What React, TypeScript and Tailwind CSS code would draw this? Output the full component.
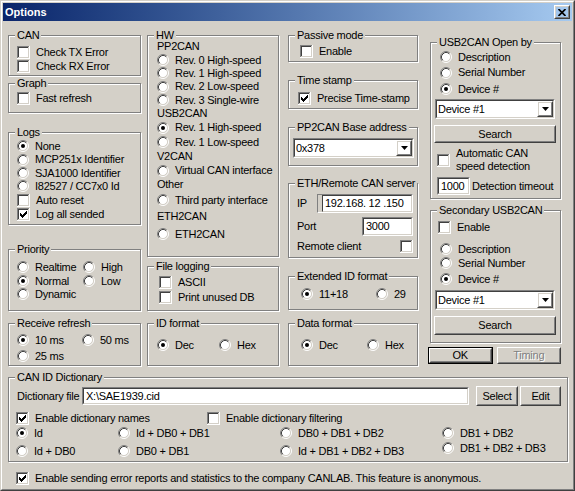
import React from "react";

const sunkO = "border border-t-[#808080] border-l-[#808080] border-b-white border-r-white";
const sunkI = "border border-t-[#404040] border-l-[#404040] border-b-[#D4D0C8] border-r-[#D4D0C8]";
const raisO = "border border-t-white border-l-white border-b-[#404040] border-r-[#404040]";
const raisI = "border border-t-[#D4D0C8] border-l-[#D4D0C8] border-b-[#808080] border-r-[#808080]";

function Check({ checked }: { checked?: boolean }) {
  return (
    <svg width="13" height="13" viewBox="0 0 13 13" className="shrink-0 block" shapeRendering="crispEdges">
      <rect x="2" y="2" width="9" height="9" fill="#fff" />
      <path d="M0.5 12V0.5H12" stroke="#808080" fill="none" />
      <path d="M1.5 11V1.5H11" stroke="#404040" fill="none" />
      <path d="M0 12.5H12.5V0" stroke="#fff" fill="none" />
      <path d="M1 11.5H11.5V1" stroke="#D4D0C8" fill="none" />
      {checked && (
        <path
          d="M3 5h1v3h-1z M4 6h1v3h-1z M5 7h1v3h-1z M6 6h1v3h-1z M7 5h1v3h-1z M8 4h1v3h-1z M9 3h1v3h-1z"
          fill="#000"
        />
      )}
    </svg>
  );
}

function Radio({ checked }: { checked?: boolean }) {
  return (
    <svg width="12" height="12" viewBox="0 0 12 12" className="shrink-0 block">
      <circle cx="6" cy="6" r="4.5" fill="#fff" />
      <path d="M2.11 9.89A5.5 5.5 0 0 1 9.89 2.11" stroke="#808080" fill="none" />
      <path d="M9.89 2.11A5.5 5.5 0 0 1 2.11 9.89" stroke="#fff" fill="none" />
      <path d="M2.82 9.18A4.5 4.5 0 0 1 9.18 2.82" stroke="#404040" fill="none" />
      <path d="M9.18 2.82A4.5 4.5 0 0 1 2.82 9.18" stroke="#D4D0C8" fill="none" />
      {checked && <circle cx="6" cy="6" r="2" fill="#000" />}
    </svg>
  );
}

function CB({ label, checked, className = "" }: { label: React.ReactNode; checked?: boolean; className?: string }) {
  return (
    <div className={`flex items-center ${className}`}>
      <Check checked={checked} />
      <span className="ml-[6px] whitespace-nowrap">{label}</span>
    </div>
  );
}

function RB({ label, checked, className = "" }: { label: string; checked?: boolean; className?: string }) {
  return (
    <div className={`flex items-center ${className}`}>
      <Radio checked={checked} />
      <span className="ml-[6px] whitespace-nowrap">{label}</span>
    </div>
  );
}

function Group({ label, className = "", children }: { label: string; className?: string; children?: React.ReactNode }) {
  return (
    <div className={`relative shrink-0 border border-[#808080] shadow-[inset_1px_1px_0_#fff,1px_1px_0_#fff] ${className}`}>
      <span className="absolute left-[6px] top-[-7px] px-[2px] bg-[#D4D0C8] leading-[13px] whitespace-nowrap">{label}</span>
      {children}
    </div>
  );
}

function Field({ value, className = "" }: { value: string; className?: string }) {
  return (
    <div className={`${sunkO} ${className}`}>
      <div className={`${sunkI} h-full bg-white flex items-center pl-[2px] whitespace-pre`}>{value}</div>
    </div>
  );
}

function Combo({ value, className = "" }: { value: string; className?: string }) {
  return (
    <div className={`${sunkO} ${className}`}>
      <div className={`${sunkI} h-full bg-white flex`}>
        <span className="self-center pl-[1px] whitespace-nowrap">{value}</span>
        <div className={`${raisO} ml-auto w-[16px] h-full`}>
          <div className={`${raisI} h-full flex items-center justify-center`}>
            <svg width="7" height="4" viewBox="0 0 7 4" className="block">
              <path d="M0 0h7l-3.5 4z" fill="#000" />
            </svg>
          </div>
        </div>
      </div>
    </div>
  );
}

function Btn({ children, className = "", disabled }: { children: React.ReactNode; className?: string; disabled?: boolean }) {
  return (
    <div className={`${raisO} ${className}`}>
      <div
        className={`${raisI} h-full flex items-center justify-center ${
          disabled ? "text-[#808080] [text-shadow:1px_1px_0_#fff]" : ""
        }`}
      >
        {children}
      </div>
    </div>
  );
}

export default function App() {
  return (
    <div className="w-[575px] h-[491px] bg-[#D4D0C8] text-black text-[11px] leading-[13px] font-['Liberation_Sans',Arial,sans-serif] tracking-[-0.25px] border border-t-[#D4D0C8] border-l-[#D4D0C8] border-b-[#404040] border-r-[#404040] overflow-hidden">
      <div className="h-full border border-t-white border-l-white border-b-[#808080] border-r-[#808080] p-[1px] flex flex-col">
        {/* Title bar */}
        <div className="h-[18px] shrink-0 flex items-center bg-linear-to-r from-[#0A246A] to-[#A6CAF0] pl-[2px] pr-[2px]">
          <span className="text-white font-bold tracking-normal">Options</span>
          <div className={`${raisO} ml-auto w-[16px] h-[14px]`}>
            <div className={`${raisI} h-full flex items-center justify-center`}>
              <svg width="8" height="7" viewBox="0 0 8 7" className="block">
                <path d="M0.5 0 L7.5 7 M7.5 0 L0.5 7" stroke="#000" strokeWidth="1.7" />
              </svg>
            </div>
          </div>
        </div>

        {/* Content */}
        <div className="pl-[5px] pt-[14px] flex flex-col">
          <div className="flex items-start h-[331px]">
            {/* Column 1 */}
            <div className="w-[133px] flex flex-col">
              <Group label="CAN" className="h-[41px] pt-[9px] pl-[8px]">
                <CB label="Check TX Error" className="h-[14px]" />
                <CB label="Check RX Error" className="h-[14px]" />
              </Group>
              <Group label="Graph" className="mt-[7px] h-[30px] pt-[7px] pl-[8px]">
                <CB label="Fast refresh" className="h-[14px]" />
              </Group>
              <Group label="Logs" className="mt-[19px] h-[93px] pt-[6px] pl-[8px]">
                <RB label="None" checked className="h-[14px]" />
                <RB label="MCP251x Identifier" className="h-[13.5px]" />
                <RB label="SJA1000 Identifier" className="h-[13px]" />
                <RB label="I82527 / CC7x0 Id" className="h-[13.5px]" />
                <CB label="Auto reset" className="h-[14px]" />
                <CB label="Log all sended" checked className="h-[14px]" />
              </Group>
              <Group label="Priority" className="mt-[24px] h-[62px] pt-[9.5px] pl-[8px]">
                <div className="flex h-[15px]">
                  <RB label="Realtime" className="w-[66px]" />
                  <RB label="High" />
                </div>
                <div className="flex h-[13.5px]">
                  <RB label="Normal" checked className="w-[66px]" />
                  <RB label="Low" />
                </div>
                <RB label="Dynamic" className="h-[12px]" />
              </Group>
              <Group label="Receive refresh" className="mt-[12px] h-[43px] pt-[8px] pl-[8px]">
                <div className="flex h-[16px]">
                  <RB label="10 ms" checked className="w-[65px]" />
                  <RB label="50 ms" />
                </div>
                <RB label="25 ms" className="h-[16px]" />
              </Group>
            </div>

            {/* Column 2 */}
            <div className="w-[132px] ml-[6px] flex flex-col">
              <Group label="HW" className="h-[222px] pt-[4px] pl-[9px]">
                <div className="h-[13.5px] flex items-center">PP2CAN</div>
                <RB label="Rev. 0 High-speed" className="h-[13px]" />
                <RB label="Rev. 1 High-speed" className="h-[13.5px]" />
                <RB label="Rev. 2 Low-speed" className="h-[13.5px]" />
                <RB label="Rev. 3 Single-wire" className="h-[13px]" />
                <div className="h-[14px] flex items-center">USB2CAN</div>
                <RB label="Rev. 1 High-speed" checked className="h-[14.5px]" />
                <RB label="Rev. 1 Low-speed" className="h-[14px]" />
                <div className="h-[14.5px] flex items-center">V2CAN</div>
                <RB label="Virtual CAN interface" className="h-[14px]" />
                <div className="h-[14.5px] flex items-center">Other</div>
                <RB label="Third party interface" className="h-[16px]" />
                <div className="h-[17px] flex items-center">ETH2CAN</div>
                <RB label="ETH2CAN" className="h-[18px]" />
              </Group>
              <Group label="File logging" className="mt-[9px] h-[45px] pt-[7.5px] pl-[11px]">
                <CB label="ASCII" className="h-[15px]" />
                <CB label="Print unused DB" className="h-[15px]" />
              </Group>
              <Group label="ID format" className="mt-[12px] h-[43px] pt-[14px] pl-[9px]">
                <div className="flex h-[14px]">
                  <RB label="Dec" checked className="w-[62px]" />
                  <RB label="Hex" />
                </div>
              </Group>
            </div>

            {/* Column 3 */}
            <div className="w-[130px] ml-[9px] flex flex-col">
              <Group label="Passive mode" className="h-[27px] pt-[8px] pl-[11px]">
                <CB label="Enable" className="h-[14px]" />
              </Group>
              <Group label="Time stamp" className="mt-[18px] h-[29px] pt-[10px] pl-[9px]">
                <CB label="Precise Time-stamp" checked className="h-[14px]" />
              </Group>
              <Group label="PP2CAN Base address" className="mt-[18px] h-[39px] pt-[10px] pl-[4px]">
                <Combo value="0x378" className="w-[121px] h-[20px]" />
              </Group>
              <Group label="ETH/Remote CAN server" className="mt-[17px] h-[75px] pt-[10px]">
                <div className="flex items-center justify-between h-[19px]">
                  <span className="pl-[8px]">IP</span>
                  <Field value="192.168. 12 .150" className="w-[96px] h-[19px] mr-[4px] pl-[4px]" />
                </div>
                <div className="flex items-center justify-between h-[19px] mt-[4px]">
                  <span className="pl-[8px]">Port</span>
                  <Field value="3000" className="w-[51px] h-[19px] mr-[4px]" />
                </div>
                <div className="flex items-center justify-between h-[13px] mt-[4px]">
                  <span className="pl-[8px]">Remote client</span>
                  <div className="mr-[4px]">
                    <Check />
                  </div>
                </div>
              </Group>
              <Group label="Extended ID format" className="mt-[18px] h-[34px] pt-[10px] pl-[12px]">
                <div className="flex h-[14px]">
                  <RB label="11+18" checked className="w-[75px]" />
                  <RB label="29" />
                </div>
              </Group>
              <Group label="Data format" className="mt-[13px] h-[43px] pt-[14px] pl-[12px]">
                <div className="flex h-[14px]">
                  <RB label="Dec" checked className="w-[66px]" />
                  <RB label="Hex" />
                </div>
              </Group>
            </div>

            {/* Column 4 */}
            <div className="w-[131px] ml-[12px] flex flex-col">
              <Group label="USB2CAN Open by" className="mt-[7px] h-[157px] pt-[6.5px]">
                <div className="pl-[9px]">
                  <RB label="Description" className="h-[15px]" />
                  <RB label="Serial Number" className="h-[16px]" />
                  <RB label="Device #" checked className="h-[17px]" />
                </div>
                <Combo value="Device #1" className="mt-[1.5px] ml-[4px] w-[120px] h-[20px]" />
                <Btn className="mt-[6px] ml-[3px] w-[122px] h-[18px]">Search</Btn>
                <div className="mt-[4px] pl-[6px] flex items-center h-[26px]">
                  <Check />
                  <span className="ml-[6px] leading-[13px]">
                    Automatic CAN
                    <br />
                    speed detection
                  </span>
                </div>
                <div className="mt-[4px] pl-[6px] flex items-center h-[18px]">
                  <Field value="1000" className="w-[33px] h-[18px]" />
                  <span className="ml-[2px] whitespace-nowrap">Detection timeout</span>
                </div>
              </Group>
              <Group label="Secondary USB2CAN" className="mt-[11px] h-[133px] pt-[9px]">
                <CB label="Enable" className="h-[14px] pl-[7px]" />
                <div className="pl-[9px] mt-[8px]">
                  <RB label="Description" className="h-[14px]" />
                  <RB label="Serial Number" className="h-[14px]" />
                  <RB label="Device #" checked className="h-[18px]" />
                </div>
                <Combo value="Device #1" className="mt-[2px] ml-[4px] w-[120px] h-[20px]" />
                <Btn className="mt-[6px] ml-[3px] w-[122px] h-[19px]">Search</Btn>
              </Group>
              <div className="flex mt-[4px] ml-[-2px]">
                <div className="border border-black w-[65px] h-[17px]">
                  <Btn className="h-full">OK</Btn>
                </div>
                <Btn disabled className="ml-[4px] w-[65px] h-[17px]">
                  Timing
                </Btn>
              </div>
            </div>
          </div>

          {/* CAN ID Dictionary */}
          <Group label="CAN ID Dictionary" className="mt-[11px] w-[560px] h-[85px] pt-[8px]">
            <div className="flex items-center h-[20px]">
              <span className="w-[73px] pl-[8px] whitespace-nowrap">Dictionary file</span>
              <Field value={"X:\\SAE1939.cid"} className="w-[387px] h-[18px]" />
              <Btn className="ml-[7px] w-[42px] h-[20px]">Select</Btn>
              <Btn className="ml-[2px] w-[41px] h-[20px]">Edit</Btn>
            </div>
            <div className="flex mt-[5px] h-[14px] pl-[7px]">
              <CB label="Enable dictionary names" checked className="w-[191px]" />
              <CB label="Enable dictionary filtering" />
            </div>
            <div className="flex pl-[7px] mt-[1px]">
              <div className="w-[102px] flex flex-col">
                <RB label="Id" checked className="h-[14px]" />
                <RB label="Id + DB0" className="h-[14px] mt-[4px]" />
              </div>
              <div className="w-[162px] flex flex-col">
                <RB label="Id + DB0 + DB1" className="h-[14px]" />
                <RB label="DB0 + DB1" className="h-[14px] mt-[4px]" />
              </div>
              <div className="w-[162px] flex flex-col">
                <RB label="DB0 + DB1 + DB2" className="h-[14px]" />
                <RB label="Id + DB1 + DB2 + DB3" className="h-[14px] mt-[4px]" />
              </div>
              <div className="flex flex-col">
                <RB label="DB1 + DB2" className="h-[14px]" />
                <RB label="DB1 + DB2 + DB3" className="h-[14px] mt-[1px]" />
              </div>
            </div>
          </Group>

          <CB
            label="Enable sending error reports and statistics to the company CANLAB. This feature is anonymous."
            checked
            className="mt-[9px] ml-[8px] h-[14px]"
          />
        </div>
      </div>
    </div>
  );
}
